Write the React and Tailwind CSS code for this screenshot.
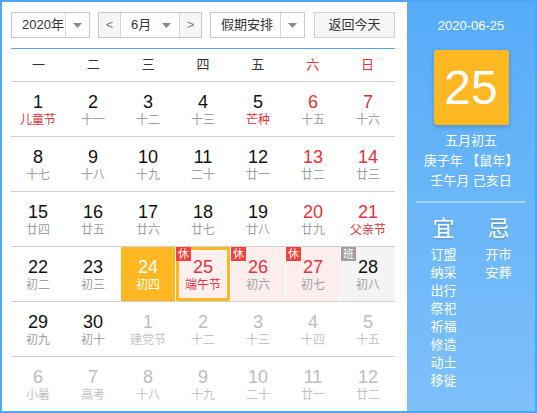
import React from 'react';

const FONT = { fontFamily: '"Liberation Sans", Arial, "Noto Sans CJK SC", sans-serif' };

const rows = [
  [
    { d: 1, l: '儿童节', hl: true },
    { d: 2, l: '十一' },
    { d: 3, l: '十二' },
    { d: 4, l: '十三' },
    { d: 5, l: '芒种', hl: true },
    { d: 6, l: '十五', we: true },
    { d: 7, l: '十六', we: true },
  ],
  [
    { d: 8, l: '十七' },
    { d: 9, l: '十八' },
    { d: 10, l: '十九' },
    { d: 11, l: '二十' },
    { d: 12, l: '廿一' },
    { d: 13, l: '廿二', we: true },
    { d: 14, l: '廿三', we: true },
  ],
  [
    { d: 15, l: '廿四' },
    { d: 16, l: '廿五' },
    { d: 17, l: '廿六' },
    { d: 18, l: '廿七' },
    { d: 19, l: '廿八' },
    { d: 20, l: '廿九', we: true },
    { d: 21, l: '父亲节', we: true, hl: true },
  ],
  [
    { d: 22, l: '初二' },
    { d: 23, l: '初三' },
    { d: 24, l: '初四', hover: true },
    { d: 25, l: '端午节', rest: true, sel: true, hl: true },
    { d: 26, l: '初六', rest: true },
    { d: 27, l: '初七', rest: true },
    { d: 28, l: '初八', work: true },
  ],
  [
    { d: 29, l: '初九' },
    { d: 30, l: '初十' },
    { d: 1, l: '建党节', other: true },
    { d: 2, l: '十二', other: true },
    { d: 3, l: '十三', other: true },
    { d: 4, l: '十四', other: true },
    { d: 5, l: '十五', other: true },
  ],
  [
    { d: 6, l: '小暑', other: true },
    { d: 7, l: '高考', other: true },
    { d: 8, l: '十八', other: true },
    { d: 9, l: '十九', other: true },
    { d: 10, l: '二十', other: true },
    { d: 11, l: '廿一', other: true },
    { d: 12, l: '廿二', other: true },
  ],
];

const weekdays = ['一', '二', '三', '四', '五', '六', '日'];
const yi = ['订盟', '纳采', '出行', '祭祀', '祈福', '修造', '动土', '移徙'];
const ji = ['开市', '安葬'];

function Caret() {
  return (
    <svg width="9" height="5" viewBox="0 0 9 5">
      <path d="M0 0h9L4.5 5z" fill="#8a8a8a" />
    </svg>
  );
}

function Cell({ c }) {
  let bg = '';
  if (c.hover) bg = 'bg-[#ffb822]';
  else if (c.sel) bg = 'bg-[#fff0f0] border-[3px] border-[#ffb822]';
  else if (c.rest) bg = 'bg-[#fdeeee]';
  else if (c.work) bg = 'bg-[#f4f4f4]';

  let num = 'text-[#111]';
  if (c.other) num = 'text-[#bdbdbd]';
  else if (c.hover) num = 'text-white';
  else if (c.we || c.rest) num = 'text-[#e5323a]';

  let lun = 'text-[#a0a0a0]';
  if (c.other) lun = 'text-[#c3c3c3]';
  else if (c.hover) lun = 'text-white';
  else if (c.hl) lun = 'text-[#e5323a]';

  return (
    <div className={`relative h-[54px] flex flex-col items-center ${c.sel ? 'pt-[7px]' : 'pt-[10px]'} ${bg}`}>
      {(c.rest || c.work) && (
        <span
          className={`absolute ${c.sel ? '-left-[3px] -top-[3px]' : 'left-0 top-0'} w-[15px] h-[14px] flex items-center justify-center text-[11px] leading-none text-white ${c.work ? 'bg-[#9d9d9d]' : 'bg-[#f2403c]'}`}
        >
          {c.work ? '班' : '休'}
        </span>
      )}
      <span className={`text-[18px] leading-[20px] ${num}`}>{c.d}</span>
      <span className={`text-[12px] leading-[16px] ${lun}`}>{c.l}</span>
    </div>
  );
}

export default function App() {
  return (
    <div className="w-[537px] h-[413px] border-2 border-[#4fa6f5] flex overflow-hidden" style={FONT}>
      <div className="w-[405px] h-full bg-white pl-[9px] pr-[12px] pt-[10px]">
        <div className="flex items-center h-[26px] text-[13px] text-[#333]">
          <div className="w-[79px] h-full border border-[#c6c6c6] flex">
            <div className="flex-1 flex items-center pl-[10px]">2020年</div>
            <div className="w-[24px] border-l border-[#d4d4d4] flex items-center justify-center">
              <Caret />
            </div>
          </div>
          <div className="ml-[8px] w-[104px] h-full border border-[#c6c6c6] flex">
            <div className="w-[22px] bg-[#f6f6f6] border-r border-[#d4d4d4] flex items-center justify-center text-[#777]">&lt;</div>
            <div className="flex-1 flex items-center justify-between pl-[10px] pr-[8px]">
              <span>6月</span>
              <Caret />
            </div>
            <div className="w-[22px] bg-[#f6f6f6] border-l border-[#d4d4d4] flex items-center justify-center text-[#777]">&gt;</div>
          </div>
          <div className="ml-[8px] w-[95px] h-full border border-[#c6c6c6] flex">
            <div className="flex-1 flex items-center pl-[10px]">假期安排</div>
            <div className="w-[24px] border-l border-[#d4d4d4] flex items-center justify-center">
              <Caret />
            </div>
          </div>
          <div className="ml-[9px] w-[81px] h-full border border-[#d0d0d0] bg-[#f6f6f6] flex items-center justify-center">
            返回今天
          </div>
        </div>

        <div className="mt-[10px] border-t border-[#4fa6f5] grid grid-cols-7 h-[34px] items-center text-[13px] border-b border-b-[#d0d0d0]">
          {weekdays.map((w, i) => (
            <div key={w} className={`text-center ${i >= 5 ? 'text-[#e5323a]' : 'text-[#333]'}`}>{w}</div>
          ))}
        </div>

        {rows.map((r, i) => (
          <div key={i} className={`grid grid-cols-7 gap-x-px ${i < rows.length - 1 ? 'border-b border-[#d0d0d0]' : ''}`}>
            {r.map((c, j) => (
              <Cell key={j} c={c} />
            ))}
          </div>
        ))}
      </div>

      <div className="flex-1 h-full bg-gradient-to-b from-[#56acf8] to-[#7dc0fa] flex flex-col items-center text-white">
        <div className="mt-[15px] text-[13px] leading-[18px]">2020-06-25</div>
        <div className="mt-[15px] w-[75px] h-[75px] rounded-[3px] bg-[#ffb822] shadow-[0_2px_4px_rgba(0,0,0,0.2)] flex items-center justify-center text-[48px] leading-none">
          25
        </div>
        <div className="mt-[6px] text-[13px] leading-[20px] text-center">
          <div>五月初五</div>
          <div>庚子年 【鼠年】</div>
          <div>壬午月 己亥日</div>
        </div>
        <div className="mt-[10px] w-[110px] h-[2px] bg-white/40" />
        <div className="mt-[14px] flex gap-[29px]">
          <div className="w-[26px] flex flex-col items-center">
            <div className="text-[22px] leading-[24px] [text-shadow:0_1px_2px_rgba(0,0,0,0.25)]">宜</div>
            <div className="mt-[5px] text-[13px] leading-[18px]">
              {yi.map(t => <div key={t}>{t}</div>)}
            </div>
          </div>
          <div className="w-[26px] flex flex-col items-center">
            <div className="text-[22px] leading-[24px] [text-shadow:0_1px_2px_rgba(0,0,0,0.25)]">忌</div>
            <div className="mt-[5px] text-[13px] leading-[18px]">
              {ji.map(t => <div key={t}>{t}</div>)}
            </div>
          </div>
        </div>
      </div>
    </div>
  );
}
